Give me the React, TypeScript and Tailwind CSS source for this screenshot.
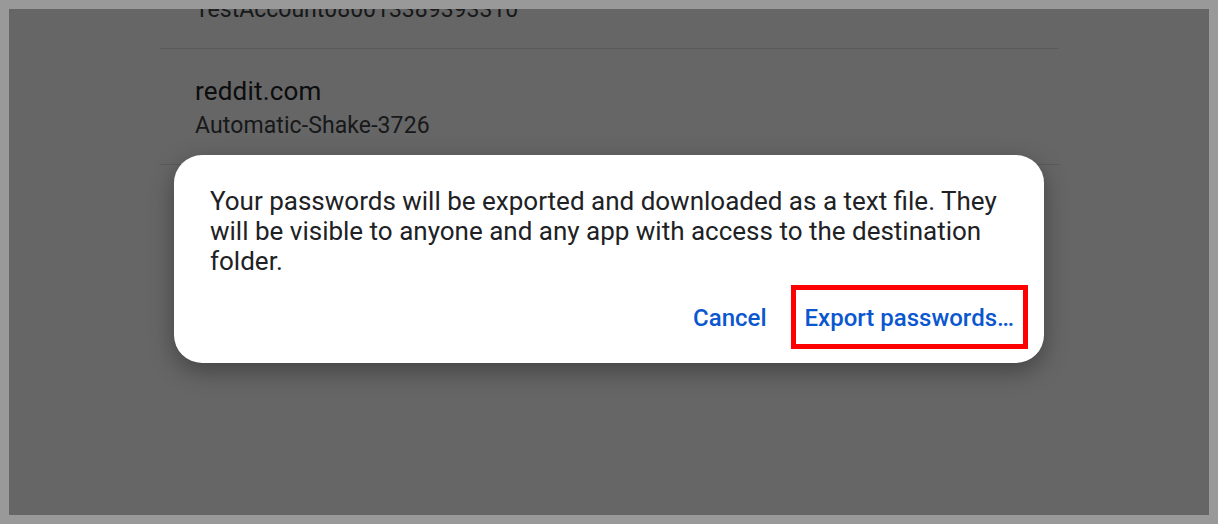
import React from "react";

const font = { fontFamily: "Roboto, 'Noto Sans', sans-serif" };

export default function App() {
  return (
    <div className="h-[524px] w-[1218px] bg-[#999999] p-[9px]" style={font}>
      <div className="relative h-[506px] w-[1200px] overflow-hidden bg-white">
        {/* underlying list */}
        <div className="mt-[-76px] ml-[151px] w-[899px]">
          <div className="border-b border-[#e4e4e4] pb-[24px] pl-[35px] pt-[27px]">
            <div className="text-[26px] leading-[30px] text-[#202124]">example.com</div>
            <div className="mt-[6px] text-[23px] leading-[28px] text-[#3c4043]">
              TestAccount080013389393310
            </div>
          </div>
          <div className="border-b border-[#e4e4e4] pb-[24px] pl-[35px] pt-[27px]">
            <div className="text-[26px] leading-[30px] tracking-[0.2px] text-[#202124]">reddit.com</div>
            <div className="mt-[6px] text-[23px] leading-[28px] tracking-[0.1px] text-[#3c4043]">
              Automatic-Shake-3726
            </div>
          </div>
        </div>

        {/* scrim + dialog */}
        <div className="absolute inset-0 flex items-center justify-center bg-black/60 pb-[7px]">
          <div className="w-[870px] rounded-[28px] bg-white pb-[14px] pl-[36px] pr-[16px] pt-[31px] shadow-[0_8px_24px_rgba(0,0,0,0.35)]">
            <p className="mr-[20px] text-[26px] leading-[30px] text-[#202124]">
              Your passwords will be exported and downloaded as a text file. They will be visible to
              anyone and any app with access to the destination folder.
            </p>
            <div className="mt-[9px] flex items-center justify-end">
              <button className="px-[12px] pb-[12px] pt-[14px] text-[24px] font-medium leading-[28px] text-[#0b57d0]">
                Cancel
              </button>
              <button className="ml-[12px] border-[5px] border-[#ff0000] px-[9px] pb-[12px] pt-[14px] text-[24px] font-medium leading-[28px] text-[#0b57d0]">
                Export passwords…
              </button>
            </div>
          </div>
        </div>
      </div>
    </div>
  );
}
